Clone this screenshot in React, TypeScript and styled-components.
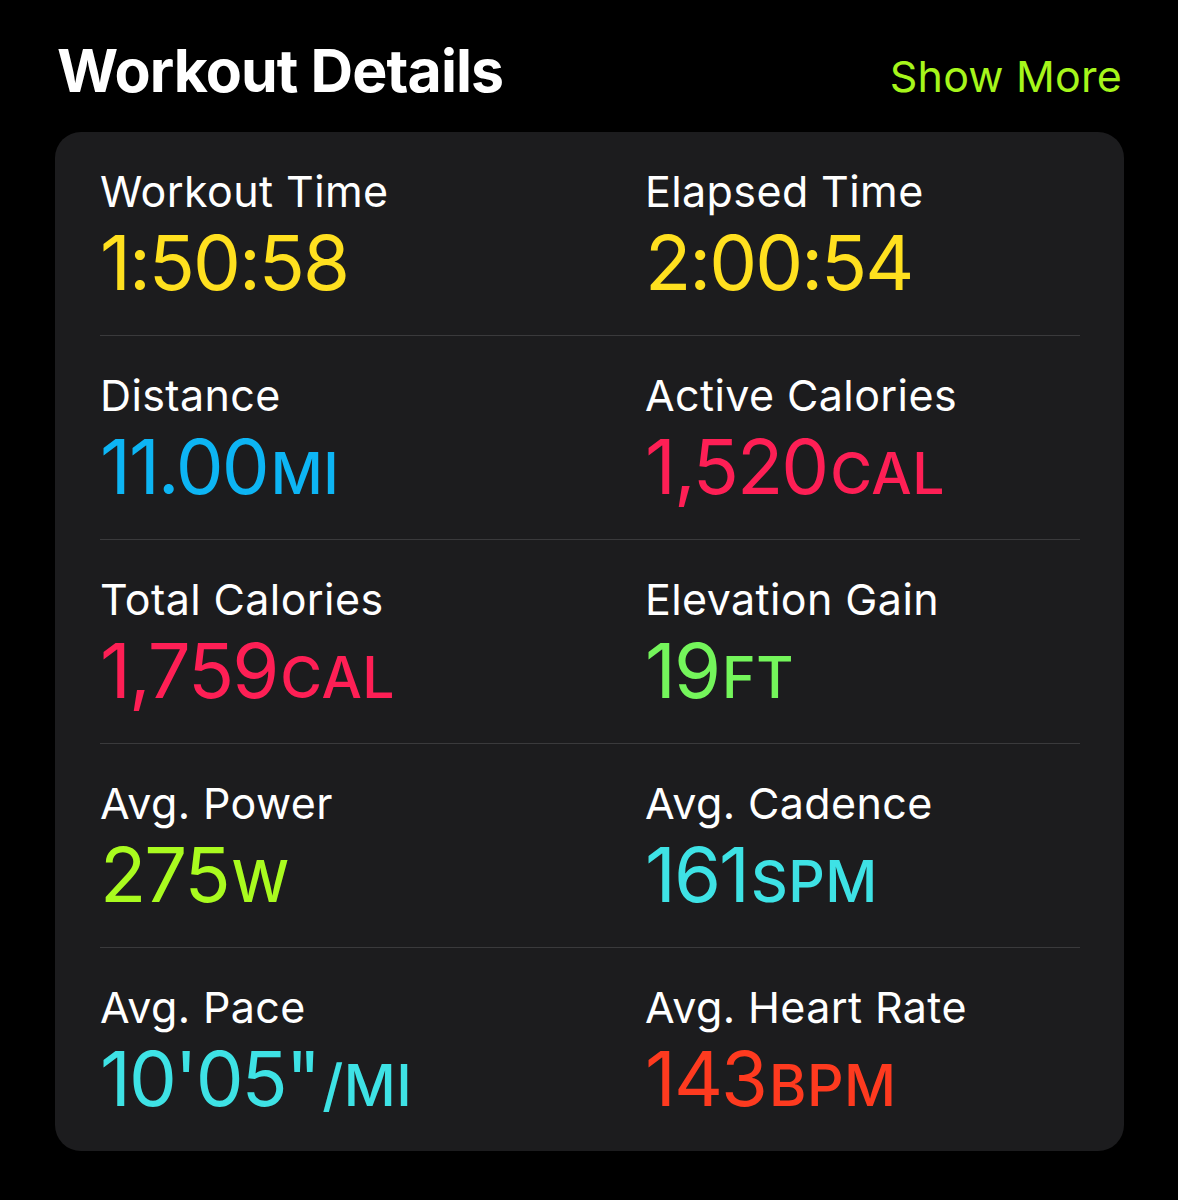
import React from "react";
import styled, { createGlobalStyle } from "styled-components";

const GlobalStyle = createGlobalStyle`
  html, body {
    margin: 0;
    padding: 0;
    background: #000;
  }
  body {
    font-family: Inter, "Noto Sans", "Liberation Sans", sans-serif;
    -webkit-font-smoothing: antialiased;
  }
`;

type Metric = {
  label: string;
  value: string;
  unit?: string;
  color: string;
};

const METRICS: Metric[][] = [
  [
    { label: "Workout Time", value: "1:50:58", color: "#ffe01f" },
    { label: "Elapsed Time", value: "2:00:54", color: "#ffe01f" },
  ],
  [
    { label: "Distance", value: "11.00", unit: "MI", color: "#0db5f4" },
    { label: "Active Calories", value: "1,520", unit: "CAL", color: "#fe1f55" },
  ],
  [
    { label: "Total Calories", value: "1,759", unit: "CAL", color: "#fe1f55" },
    { label: "Elevation Gain", value: "19", unit: "FT", color: "#74f55b" },
  ],
  [
    { label: "Avg. Power", value: "275", unit: "W", color: "#a9fb1f" },
    { label: "Avg. Cadence", value: "161", unit: "SPM", color: "#3ee2e5" },
  ],
  [
    { label: "Avg. Pace", value: "10'05\"", unit: "/MI", color: "#3ee2e5" },
    { label: "Avg. Heart Rate", value: "143", unit: "BPM", color: "#fe3a1f" },
  ],
];

const Page = styled.div`
  width: 1178px;
  padding: 41px 54px 48px 55px;
  box-sizing: border-box;
`;

const Header = styled.div`
  display: flex;
  align-items: baseline;
  justify-content: space-between;
  margin-bottom: 32px;
`;

const Title = styled.h1`
  margin: 0 0 0 2px;
  font-size: 59px;
  line-height: 1;
  font-weight: 700;
  color: #fff;
  letter-spacing: -0.9px;
`;

const ShowMore = styled.a`
  font-size: 43px;
  line-height: 1;
  color: #a6f61b;
  margin-right: 2px;
  letter-spacing: 0.2px;
  cursor: pointer;
`;

const Card = styled.section`
  background: #1c1c1e;
  border-radius: 26px;
  padding: 0 44px 0 45px;
`;

const Row = styled.div<{ $last?: boolean }>`
  display: grid;
  grid-template-columns: 545px 1fr;
  padding: 38px 0 35px;
  border-bottom: ${(p) => (p.$last ? "none" : "1px solid #3a3a3c")};
`;

const Cell = styled.div`
  display: flex;
  flex-direction: column;
  gap: 11px;
`;

const Label = styled.div`
  font-size: 43px;
  line-height: 1;
  color: #fff;
  letter-spacing: 0.4px;
`;

const Value = styled.div<{ $color: string }>`
  font-size: 76px;
  line-height: 1;
  color: ${(p) => p.$color};
  letter-spacing: -2px;
  white-space: nowrap;
`;

const Unit = styled.span`
  font-size: 57px;
  font-weight: 500;
  letter-spacing: 0.5px;
  margin-left: 3px;
`;

const MetricCell: React.FC<Metric> = ({ label, value, unit, color }) => (
  <Cell>
    <Label>{label}</Label>
    <Value $color={color}>
      {value}
      {unit && <Unit>{unit}</Unit>}
    </Value>
  </Cell>
);

export default function App() {
  return (
    <Page>
      <GlobalStyle />
      <Header>
        <Title>Workout Details</Title>
        <ShowMore>Show More</ShowMore>
      </Header>
      <Card>
        {METRICS.map((row, i) => (
          <Row key={i} $last={i === METRICS.length - 1}>
            {row.map((m) => (
              <MetricCell key={m.label} {...m} />
            ))}
          </Row>
        ))}
      </Card>
    </Page>
  );
}
